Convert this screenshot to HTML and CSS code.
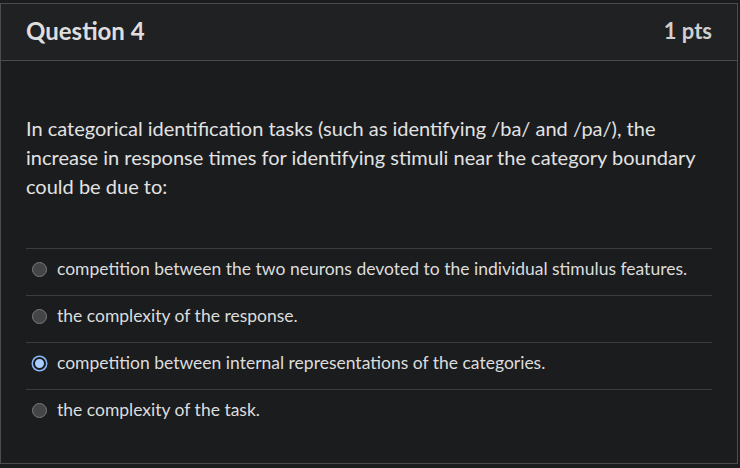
FILE: index.html
```html
<!DOCTYPE html>
<html>
<head>
<meta charset="utf-8">
<link rel="stylesheet" href="styles.css">
</head>
<body>
<div class="question">
  <div class="q-header">
    <span class="q-title">Question 4</span>
    <span class="q-pts">1 pts</span>
  </div>
  <div class="q-body">
    <p class="q-text">In categorical identification tasks (such as identifying /ba/ and /pa/), the increase in response times for identifying stimuli near the category boundary could be due to:</p>
    <div class="answers">
      <div class="answer"><span class="radio"></span><span>competition between the two neurons devoted to the individual stimulus features.</span></div>
      <div class="answer"><span class="radio"></span><span>the complexity of the response.</span></div>
      <div class="answer"><span class="radio checked"></span><span>competition between internal representations of the categories.</span></div>
      <div class="answer"><span class="radio"></span><span>the complexity of the task.</span></div>
    </div>
  </div>
</div>
</body>
</html>
```
FILE: styles.css
```css
html, body {
  margin: 0;
  padding: 0;
  background: #1b1c1e;
}
body {
  padding-top: 3px;
  font-family: Lato, "Liberation Sans", sans-serif;
  color: #dcdcdc;
}
.question {
  width: 736px;
  height: 459px;
  border: 1px solid #4b4c4e;
  background: #1b1c1e;
  box-sizing: content-box;
}
.q-header {
  height: 56px;
  background: #202123;
  border-bottom: 1px solid #4b4c4e;
  display: flex;
  align-items: center;
  justify-content: space-between;
  padding: 0 25px 0 25px;
}
.q-title {
  font-size: 24px;
  font-weight: 700;
  color: #dedede;
  margin-top: -3px;
}
.q-pts {
  font-size: 22px;
  font-weight: 700;
  color: #cfcfcf;
  margin-top: -3px;
}
.q-body {
  padding: 53px 25px 0 25px;
}
.q-text {
  margin: 0;
  font-size: 20px;
  line-height: 29px;
  color: #e2e2e2;
}
.answers {
  margin-top: 47px;
}
.answer {
  border-top: 1px solid #3c3d40;
  height: 46px;
  box-sizing: content-box;
  display: flex;
  align-items: flex-start;
  gap: 10px;
  padding-left: 6px;
  font-size: 17.5px;
  line-height: 22px;
  color: #dcdcdc;
}
.answer > span:last-child {
  margin-top: 9px;
}
.radio {
  margin-top: 13px;
  width: 13px;
  height: 13px;
  border-radius: 50%;
  background: #444547;
  border: 1px solid #7a7b7d;
  flex: none;
}
.radio.checked {
  width: 9px;
  height: 9px;
  margin-top: 14px;
  margin-left: 1px;
  margin-right: 1px;
  background: #a9cdff;
  border: 2px solid #1b1c1e;
  box-shadow: 0 0 0 1.5px #8ab8f5;
}
```
